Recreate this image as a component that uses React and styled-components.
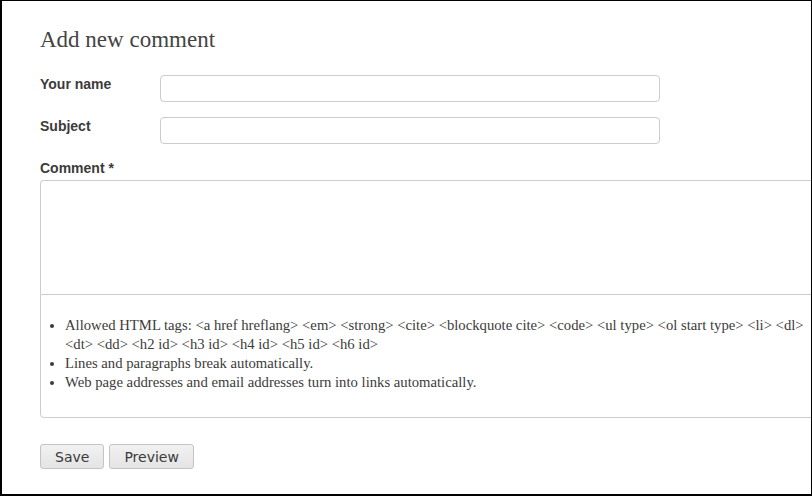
import styled, { createGlobalStyle } from 'styled-components';

const GlobalStyle = createGlobalStyle`
  html, body {
    margin: 0;
    padding: 0;
    background: #fff;
  }
`;

const Frame = styled.div`
  box-sizing: border-box;
  width: 812px;
  height: 496px;
  border-style: solid;
  border-color: #000;
  border-width: 1px 1px 2px 2px;
  overflow: hidden;
  padding: 0 0 0 38px;
  background: #fff;
`;

const Title = styled.h2`
  margin: 0;
  padding-top: 25px;
  font-family: 'Liberation Serif', serif;
  font-weight: normal;
  font-size: 23px;
  line-height: 28px;
  color: #444;
`;

const Row = styled.div`
  display: flex;
  align-items: flex-start;
  margin-top: ${({ $top }) => $top}px;
`;

const Label = styled.label`
  display: block;
  width: ${({ $width }) => ($width ? `${$width}px` : 'auto')};
  font-family: 'Liberation Sans', Arial, sans-serif;
  font-weight: bold;
  font-size: 14px;
  line-height: 18px;
  color: #3b3b3b;
`;

const TextInput = styled.input`
  box-sizing: border-box;
  width: 500px;
  height: 27px;
  margin: 0;
  border: 1px solid #ccc;
  border-radius: 4px;
  background: #fff;
  padding: 0 6px;
  font: 14px 'Liberation Sans', Arial, sans-serif;
`;

const CommentBlock = styled.div`
  margin-top: 15px;
`;

const TextArea = styled.textarea`
  display: block;
  box-sizing: border-box;
  width: 800px;
  height: 114px;
  margin: 3px 0 0 0;
  border: 1px solid #ccc;
  border-bottom: none;
  border-radius: 4px 4px 0 0;
  resize: none;
  padding: 6px;
  font: 14px 'Liberation Sans', Arial, sans-serif;
`;

const Tips = styled.div`
  box-sizing: border-box;
  width: 800px;
  height: 124px;
  border: 1px solid #ccc;
  border-radius: 0 0 4px 4px;
  padding: 21px 0 0 0;
`;

const TipList = styled.ul`
  margin: 0;
  padding: 0 0 0 24px;
  width: 745px;
  font-family: 'Liberation Serif', Georgia, serif;
  font-size: 14.7px;
  line-height: 19px;
  color: #3b3b3b;
`;

const Buttons = styled.div`
  display: flex;
  gap: 5px;
  margin-top: 26px;
`;

const Button = styled.button`
  box-sizing: border-box;
  height: 25px;
  padding: 0 14px;
  border: 1px solid #c4c4c4;
  border-radius: 3px;
  background: linear-gradient(#f1f1f1, #e4e4e4);
  font-family: 'DejaVu Sans', Verdana, sans-serif;
  font-size: 14px;
  color: #3a3a3a;
  cursor: pointer;
`;

const tips = [
  'Allowed HTML tags: <a href hreflang> <em> <strong> <cite> <blockquote cite> <code> <ul type> <ol start type> <li> <dl> <dt> <dd> <h2 id> <h3 id> <h4 id> <h5 id> <h6 id>',
  'Lines and paragraphs break automatically.',
  'Web page addresses and email addresses turn into links automatically.',
];

export default function App() {
  return (
    <>
      <GlobalStyle />
      <Frame>
        <Title>Add new comment</Title>
        <Row $top={21}>
          <Label $width={120}>Your name</Label>
          <TextInput type="text" />
        </Row>
        <Row $top={15}>
          <Label $width={120}>Subject</Label>
          <TextInput type="text" />
        </Row>
        <CommentBlock>
          <Label>Comment *</Label>
          <TextArea />
          <Tips>
            <TipList>
              {tips.map((tip) => (
                <li key={tip}>{tip}</li>
              ))}
            </TipList>
          </Tips>
        </CommentBlock>
        <Buttons>
          <Button>Save</Button>
          <Button>Preview</Button>
        </Buttons>
      </Frame>
    </>
  );
}
